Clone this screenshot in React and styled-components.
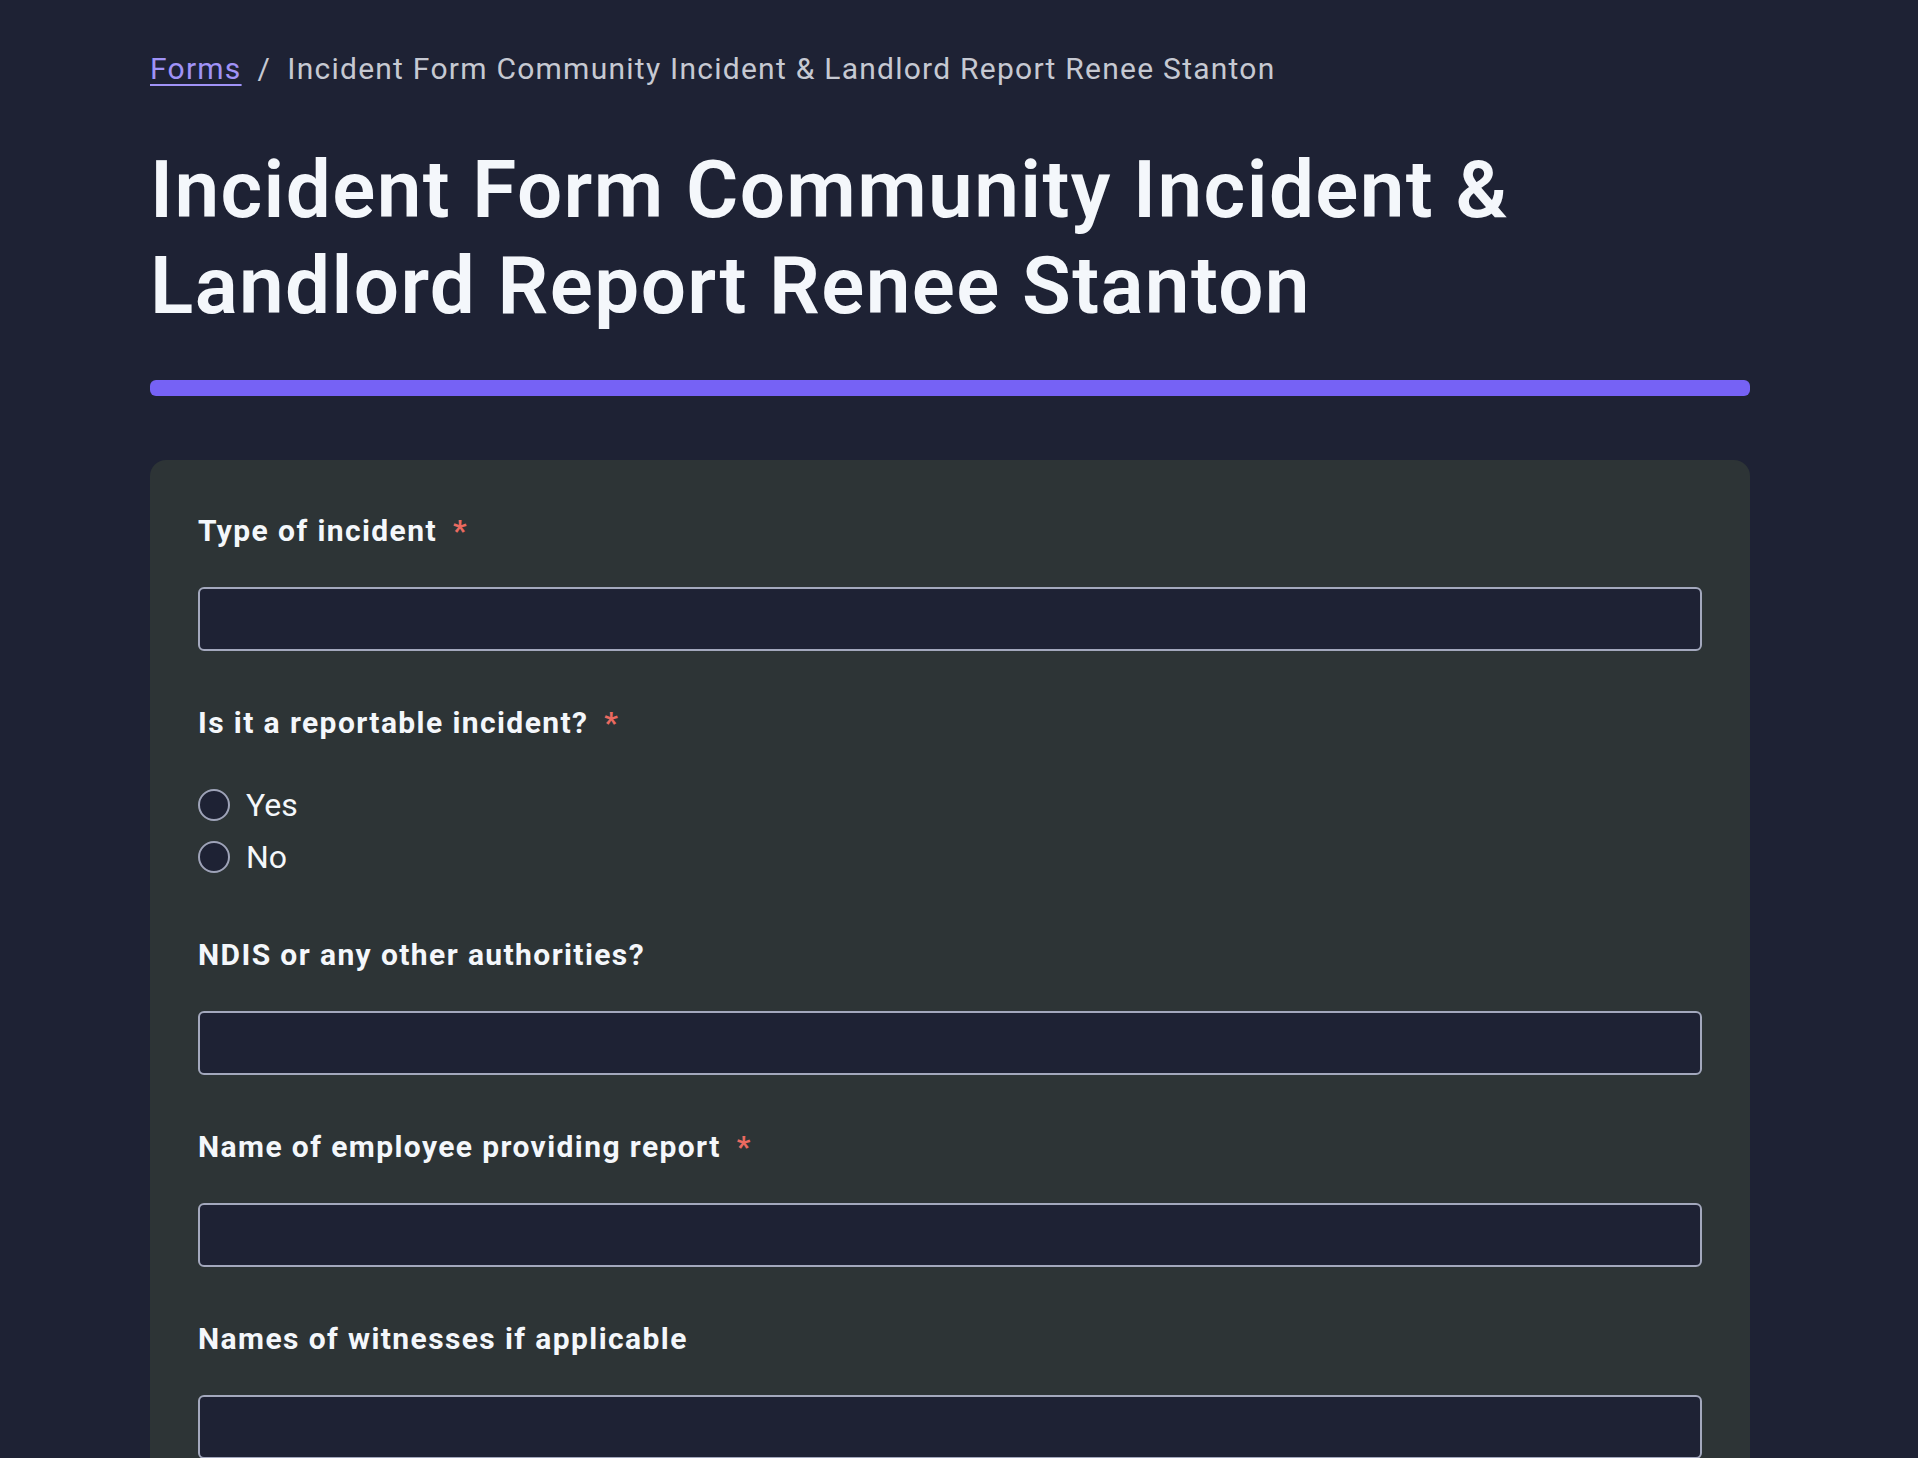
import React from "react";
import styled, { createGlobalStyle } from "styled-components";

const Global = createGlobalStyle`
  html, body { margin: 0; padding: 0; background: #1e2234; }
  body { font-family: Roboto, "Liberation Sans", sans-serif; }
  * { box-sizing: border-box; }
`;

const Page = styled.div`
  min-height: 100vh;
  background: #1e2234;
  padding: 49px 0 80px 150px;
`;

const Container = styled.main`
  width: 1600px;
  display: flex;
  flex-direction: column;
`;

const Breadcrumb = styled.nav`
  display: flex;
  align-items: center;
  gap: 16px;
  font-size: 30px;
  line-height: 40px;
  letter-spacing: 1.25px;
  color: #c6c9d2;
`;

const CrumbLink = styled.a`
  color: #a093f7;
  text-decoration: underline;
  text-underline-offset: 5px;
  text-decoration-thickness: 2px;
`;

const Title = styled.h1`
  margin: 53px 0 0;
  font-size: 80px;
  line-height: 96px;
  font-weight: 600;
  letter-spacing: 1.4px;
  color: #f4f7fb;
  max-width: 1480px;
`;

const AccentBar = styled.div`
  margin-top: 46px;
  height: 16px;
  border-radius: 6px;
  background: #7662f5;
`;

const Card = styled.section`
  margin-top: 64px;
  background: #2d3436;
  border-radius: 16px;
  padding: 51px 48px 60px;
  display: flex;
  flex-direction: column;
  gap: 52px;
`;

const Field = styled.div`
  display: flex;
  flex-direction: column;
  gap: 36px;
`;

const Label = styled.label`
  font-size: 30px;
  line-height: 40px;
  font-weight: 700;
  letter-spacing: 1.4px;
  color: #f4f7fb;
`;

const Required = styled.span`
  color: #ea6a60;
  margin-left: 16px;
`;

const TextInput = styled.input`
  height: 64px;
  width: 100%;
  background: #1e2234;
  border: 2px solid #a3a8bd;
  border-radius: 6px;
  color: #f4f7fb;
  font-size: 28px;
  padding: 0 16px;
  outline: none;
`;

const RadioGroup = styled.div`
  display: flex;
  flex-direction: column;
`;

const RadioRow = styled.label`
  display: flex;
  align-items: center;
  gap: 16px;
  height: 52px;
  font-size: 32px;
  color: #f4f7fb;
`;

const RadioCircle = styled.input`
  appearance: none;
  margin: 0;
  width: 32px;
  height: 32px;
  border-radius: 50%;
  border: 2px solid #9ea3b8;
  background: #1e2234;
`;

const fields = [
  { label: "Type of incident", required: true, type: "text" },
  { label: "Is it a reportable incident?", required: true, type: "radio", options: ["Yes", "No"] },
  { label: "NDIS or any other authorities?", type: "text" },
  { label: "Name of employee providing report", required: true, type: "text" },
  { label: "Names of witnesses if applicable", type: "text" },
];

export default function App() {
  return (
    <>
      <Global />
      <Page>
        <Container>
          <Breadcrumb>
            <CrumbLink href="#">Forms</CrumbLink>
            <span>/</span>
            <span>Incident Form Community Incident &amp; Landlord Report Renee Stanton</span>
          </Breadcrumb>
          <Title>Incident Form Community Incident &amp; Landlord Report Renee Stanton</Title>
          <AccentBar />
          <Card>
            {fields.map((f, i) => (
              <Field key={i}>
                <Label>
                  {f.label}
                  {f.required && <Required>*</Required>}
                </Label>
                {f.type === "radio" ? (
                  <RadioGroup>
                    {f.options.map((o) => (
                      <RadioRow key={o}>
                        <RadioCircle type="radio" name={`f${i}`} />
                        {o}
                      </RadioRow>
                    ))}
                  </RadioGroup>
                ) : (
                  <TextInput type="text" />
                )}
              </Field>
            ))}
          </Card>
        </Container>
      </Page>
    </>
  );
}
